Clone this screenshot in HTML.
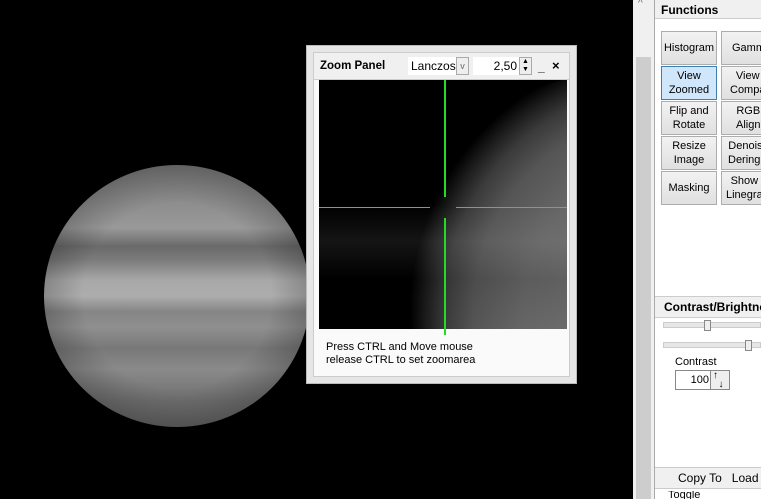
<!DOCTYPE html>
<html><head><style>
*{margin:0;padding:0;box-sizing:border-box}
html,body{width:761px;height:499px;overflow:hidden}
body{background:#000;position:relative;font-family:"Liberation Sans",sans-serif;font-size:11px;color:#000}
.abs{position:absolute}
.planet{left:44px;top:165px;width:266px;height:262px;border-radius:50%;
background:
radial-gradient(ellipse at 50% 50%,rgba(0,0,0,0) 50%,rgba(0,0,0,.35) 85%,rgba(0,0,0,.75) 100%),
linear-gradient(180deg,#7a7a7a 0%,#8e8e8e 15%,#999 24%,#6a6a6a 31%,#7a7a7a 36%,#a8a8a8 44%,#adadad 50%,#858585 56%,#8f8f8f 62%,#787878 70%,#8a8a8a 78%,#707070 90%,#666 100%)}
.btn{position:absolute;width:56px;height:34px;border:1px solid #adadad;background:linear-gradient(#f2f2f2,#e0e0e0);text-align:center;font-size:11px;line-height:14px;display:flex;align-items:center;justify-content:center;white-space:nowrap;overflow:hidden}
</style></head><body>
<div class="abs planet"></div>

<div class="abs" style="left:306px;top:45px;width:271px;height:339px;background:#e6e6e6;border:1px solid #bbb"></div>
<div class="abs" style="left:313px;top:52px;width:257px;height:325px;background:#fafafa;border:1px solid #ccc"></div>
<div class="abs" style="left:314px;top:53px;width:255px;height:27px;background:#f0f0f0;border-bottom:1px solid #ccc"></div>
<div class="abs" style="left:320px;top:60px;font-weight:bold;font-size:11.5px">Zoom Panel</div>
<div class="abs" style="left:408px;top:57px;width:60px;height:18px;background:#fff"></div>
<div class="abs" style="left:411px;top:59px;font-size:12px">Lanczos</div>
<div class="abs" style="left:456px;top:57px;width:13px;height:18px;border:1px solid #aaa;background:#eee;color:#666;font-size:9px;text-align:center;line-height:16px">v</div>
<div class="abs" style="left:473px;top:57px;width:46px;height:18px;background:#fff;text-align:right;font-size:12px;padding-top:2px;padding-right:2px">2,50</div>
<div class="abs" style="left:519px;top:57px;width:13px;height:18px;border:1px solid #aaa;background:#eee;font-size:7px;text-align:center;line-height:8px">▲<br>▼</div>
<div class="abs" style="left:538px;top:60px;font-weight:bold;font-size:12px">_</div>
<div class="abs" style="left:552px;top:58px;font-weight:bold;font-size:13px">×</div>
<div class="abs" style="left:319px;top:80px;width:248px;height:249px;overflow:hidden;background:#000">
  <div class="abs" style="left:20px;top:-10px;width:600px;height:600px;border-radius:50%;background:radial-gradient(circle at 55% 40%,#777 0%,#666 30%,#555 40%,#3a3a3a 46%,#1a1a1a 50%,#000 53%)"></div>
  <div class="abs" style="left:0;top:0;width:248px;height:249px;background:linear-gradient(180deg,rgba(0,0,0,0) 50%,rgba(140,140,140,.15) 65%,rgba(0,0,0,.1) 80%,rgba(0,0,0,0) 100%)"></div>
  <div class="abs" style="left:0;top:127px;width:111px;height:1px;background:#2d2"></div>
  <div class="abs" style="left:137px;top:127px;width:111px;height:1px;background:#2d2"></div>
  <div class="abs" style="left:125px;top:0;width:2px;height:117px;background:#2d2"></div>
  <div class="abs" style="left:125px;top:138px;width:2px;height:111px;background:#2d2"></div>
</div>
<div class="abs" style="left:444px;top:329px;width:2px;height:6px;background:#2d2"></div>
<div class="abs" style="left:326px;top:341px;font-size:11px;line-height:13px">Press CTRL and Move mouse<br>release CTRL to set zoomarea</div>

<div class="abs" style="left:633px;top:0;width:21px;height:499px;background:#f0f0f0"></div>
<div class="abs" style="left:636px;top:57px;width:15px;height:442px;background:#cdcdcd"></div>
<div class="abs" style="left:638px;top:-2px;font-size:10px;color:#666">^</div>

<div class="abs" style="left:654px;top:0;width:107px;height:499px;background:#fff;border-left:1px solid #aaa"></div>
<div class="abs" style="left:655px;top:0;width:106px;height:19px;background:#f0f0f0;border-bottom:1px solid #ccc"></div>
<div class="abs" style="left:661px;top:3px;font-weight:bold;font-size:12px">Functions</div>
<div class="btn" style="left:661px;top:31px">Histogram</div>
<div class="btn" style="left:721px;top:31px;justify-content:flex-start;padding-left:10px">Gamm</div>
<div class="btn" style="left:661px;top:66px;background:#cfe6fb;border-color:#3c7fb1">View<br>Zoomed</div>
<div class="btn" style="left:721px;top:66px;justify-content:flex-start;padding-left:8px">View<br>Compa</div>
<div class="btn" style="left:661px;top:101px">Flip and<br>Rotate</div>
<div class="btn" style="left:721px;top:101px;justify-content:flex-start;padding-left:14px">RGB<br>Align</div>
<div class="btn" style="left:661px;top:136px">Resize<br>Image</div>
<div class="btn" style="left:721px;top:136px;justify-content:flex-start;padding-left:6px">Denois<br>Deringi</div>
<div class="btn" style="left:661px;top:171px">Masking</div>
<div class="btn" style="left:721px;top:171px;justify-content:flex-start;padding-left:4px">Show<br>Linegra</div>

<div class="abs" style="left:655px;top:296px;width:106px;height:22px;background:#f0f0f0;border-top:1px solid #ccc;border-bottom:1px solid #ccc"></div>
<div class="abs" style="left:664px;top:300px;font-weight:bold;font-size:12px;white-space:nowrap">Contrast/Brightne</div>
<div class="abs" style="left:663px;top:322px;width:98px;height:6px;background:#e6e6e6;border:1px solid #ccc"></div>
<div class="abs" style="left:704px;top:320px;width:7px;height:11px;background:#eee;border:1px solid #888"></div>
<div class="abs" style="left:663px;top:342px;width:98px;height:6px;background:#e6e6e6;border:1px solid #ccc"></div>
<div class="abs" style="left:745px;top:340px;width:7px;height:11px;background:#eee;border:1px solid #888"></div>
<div class="abs" style="left:675px;top:356px;font-size:11px">Contrast</div>
<div class="abs" style="left:675px;top:370px;width:36px;height:20px;border:1px solid #888;border-right:none;background:#fff;text-align:right;padding:3px 2px 0 0;font-size:11px">100</div>
<div class="abs" style="left:710px;top:370px;width:20px;height:20px;border:1px solid #888;background:#eee;font-size:10px;font-weight:bold;line-height:9px;padding-left:2px">↑<br>&nbsp;&nbsp;↓</div>
<div class="abs" style="left:655px;top:467px;width:106px;height:22px;background:#f0f0f0;border-top:1px solid #ccc;border-bottom:1px solid #ccc"></div>
<div class="abs" style="left:678px;top:471px;font-size:12px;white-space:nowrap">Copy To&nbsp;&nbsp; Load</div>
<div class="abs" style="left:668px;top:491px;font-size:11px;line-height:8px;height:8px;overflow:hidden">Toggle</div>
</body></html>
